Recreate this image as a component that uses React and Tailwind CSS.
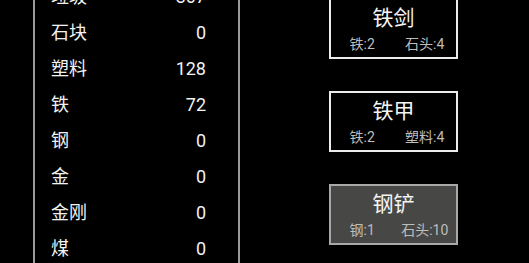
import React from 'react';

const items = [
    { name: '垃圾', count: 307 },
    { name: '石块', count: 0 },
    { name: '塑料', count: 128 },
    { name: '铁', count: 72 },
    { name: '钢', count: 0 },
    { name: '金', count: 0 },
    { name: '金刚', count: 0 },
    { name: '煤', count: 0 },
];

const recipes = [
    { name: '铁剑', needs: ['铁:2', '石头:4'], active: false },
    { name: '铁甲', needs: ['铁:2', '塑料:4'], active: false },
    { name: '钢铲', needs: ['钢:1', '石头:10'], active: true },
];

const App = () => {
    return (
        <div
            className="w-[529px] h-[263px] overflow-hidden bg-black text-white flex"
            style={{ fontFamily: "Roboto, 'Noto Sans CJK SC', sans-serif" }}
        >
            <div className="ml-[33px] w-[207px] h-[300px] -mt-[20px] border-x-2 border-[#9a9a9a] flex flex-col">
                <div className="-mt-[2px]">
                    {items.map(item => (
                        <div key={item.name} className="h-[36px] flex items-center justify-between pl-[16px] pr-[32px] text-[18px] text-[#f2f2f2]">
                            <span>{item.name}</span>
                            <span>{item.count}</span>
                        </div>
                    ))}
                </div>
            </div>

            <div className="ml-[89px] w-[129px] -mt-[2px] flex flex-col gap-[32px]">
                {recipes.map(r => (
                    <div
                        key={r.name}
                        className={`h-[61px] border-2 flex flex-col items-center ${r.active ? 'bg-[#474745] border-[#a8a8a8]' : 'bg-black border-[#ececec]'}`}
                    >
                        <div className="mt-[4px] text-[21px] leading-[28px] text-[#f4f4f4]">{r.name}</div>
                        <div className="mt-[3px] w-full grid grid-cols-2 text-[14px] leading-[18px] text-[#bdbdbd]">
                            {r.needs.map(n => (
                                <span key={n} className="text-center">{n}</span>
                            ))}
                        </div>
                    </div>
                ))}
            </div>
        </div>
    );
};

export default App;
